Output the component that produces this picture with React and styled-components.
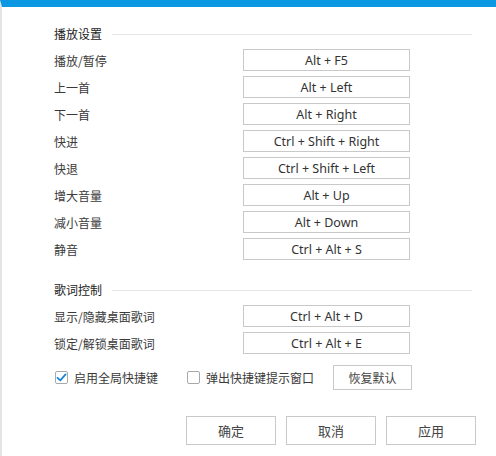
import React from "react";
import styled, { createGlobalStyle } from "styled-components";

const Global = createGlobalStyle`
  html, body { margin: 0; padding: 0; background: #fff; }
  body { font-family: "Noto Sans", "Noto Sans CJK SC", sans-serif; }
`;

const Window = styled.div`
  position: relative;
  width: 496px;
  height: 456px;
  box-sizing: border-box;
  background: #fff;
  border-top: 7px solid #0b97e2;
  border-left: 2px solid #e4e4e4;
  padding: 17px 24px 0 52px;
  color: #333;
  font-size: 12px;
  font-family: "Noto Sans", "Noto Sans CJK SC", sans-serif;
  overflow: hidden;
`;

const SideMark = styled.div`
  position: absolute;
  left: -2px;
  top: 100px;
  width: 2px;
  height: 26px;
  background: #2a9be0;
`;

const Section = styled.div`
  display: flex;
  flex-direction: column;
  gap: 5px;
  margin-top: ${(p) => p.$mt || 0}px;
`;

const Header = styled.div`
  display: flex;
  align-items: center;
  gap: 10px;
  height: 20px;
  line-height: 20px;
  color: #222;
  font-family: "Noto Sans CJK SC", sans-serif;
  font-size: 12px;
  &::after {
    content: "";
    flex: 1;
    height: 1px;
    background: #e6e6e6;
  }
`;

const Row = styled.div`
  display: flex;
  align-items: center;
  height: 22px;
`;

const Label = styled.div`
  width: 189px;
  font-family: "Noto Sans CJK SC", sans-serif;
  color: #3a3a3a;
`;

const KeyBox = styled.div`
  width: 167px;
  height: 22px;
  box-sizing: border-box;
  border: 1px solid #c9c9c9;
  display: flex;
  align-items: center;
  justify-content: center;
  color: #333;
  font-size: 12.5px;
`;

const OptionRow = styled.div`
  display: flex;
  align-items: center;
  height: 25px;
  margin-top: 11px;
`;

const Check = styled.label`
  display: flex;
  align-items: center;
  gap: 6px;
  margin-left: 1px;
  margin-right: ${(p) => p.$mr}px;
  font-family: "Noto Sans CJK SC", sans-serif;
  color: #3a3a3a;
`;

const Box = styled.span`
  width: 13px;
  height: 13px;
  box-sizing: border-box;
  border: 1px solid #a8a8a8;
  border-radius: 2px;
  display: flex;
  align-items: center;
  justify-content: center;
  background: #fff;
`;

const SmallButton = styled.div`
  width: 79px;
  height: 25px;
  box-sizing: border-box;
  border: 1px solid #c9c9c9;
  display: flex;
  align-items: center;
  justify-content: center;
  font-family: "Noto Sans CJK SC", sans-serif;
  color: #444;
`;

const Footer = styled.div`
  display: flex;
  justify-content: flex-end;
  gap: 10px;
  margin-top: 26px;
  margin-right: -4px;
`;

const Button = styled.div`
  width: 90px;
  height: 29px;
  box-sizing: border-box;
  border: 1px solid #c9c9c9;
  display: flex;
  align-items: center;
  justify-content: center;
  font-family: "Noto Sans CJK SC", sans-serif;
  font-size: 13px;
  color: #444;
`;

const play = [
  ["播放/暂停", "Alt + F5"],
  ["上一首", "Alt + Left"],
  ["下一首", "Alt + Right"],
  ["快进", "Ctrl + Shift + Right"],
  ["快退", "Ctrl + Shift + Left"],
  ["增大音量", "Alt + Up"],
  ["减小音量", "Alt + Down"],
  ["静音", "Ctrl + Alt + S"],
];

const lyric = [
  ["显示/隐藏桌面歌词", "Ctrl + Alt + D"],
  ["锁定/解锁桌面歌词", "Ctrl + Alt + E"],
];

const Tick = () => (
  <svg width="11" height="11" viewBox="0 0 11 11">
    <path d="M1.5 5.8 L4.3 8.4 L9.6 2.4" fill="none" stroke="#1a86d6" strokeWidth="1.8" strokeLinecap="round" strokeLinejoin="round" />
  </svg>
);

export default function App() {
  return (
    <>
      <Global />
      <Window>
        <SideMark />
        <Section>
          <Header>播放设置</Header>
          {play.map(([l, k]) => (
            <Row key={l}>
              <Label>{l}</Label>
              <KeyBox>{k}</KeyBox>
            </Row>
          ))}
        </Section>
        <Section $mt={20}>
          <Header>歌词控制</Header>
          {lyric.map(([l, k]) => (
            <Row key={l}>
              <Label>{l}</Label>
              <KeyBox>{k}</KeyBox>
            </Row>
          ))}
        </Section>
        <OptionRow>
          <Check $mr={28}>
            <Box><Tick /></Box>
            启用全局快捷键
          </Check>
          <Check $mr={19}>
            <Box />
            弹出快捷键提示窗口
          </Check>
          <SmallButton>恢复默认</SmallButton>
        </OptionRow>
        <Footer>
          <Button>确定</Button>
          <Button>取消</Button>
          <Button>应用</Button>
        </Footer>
      </Window>
    </>
  );
}
